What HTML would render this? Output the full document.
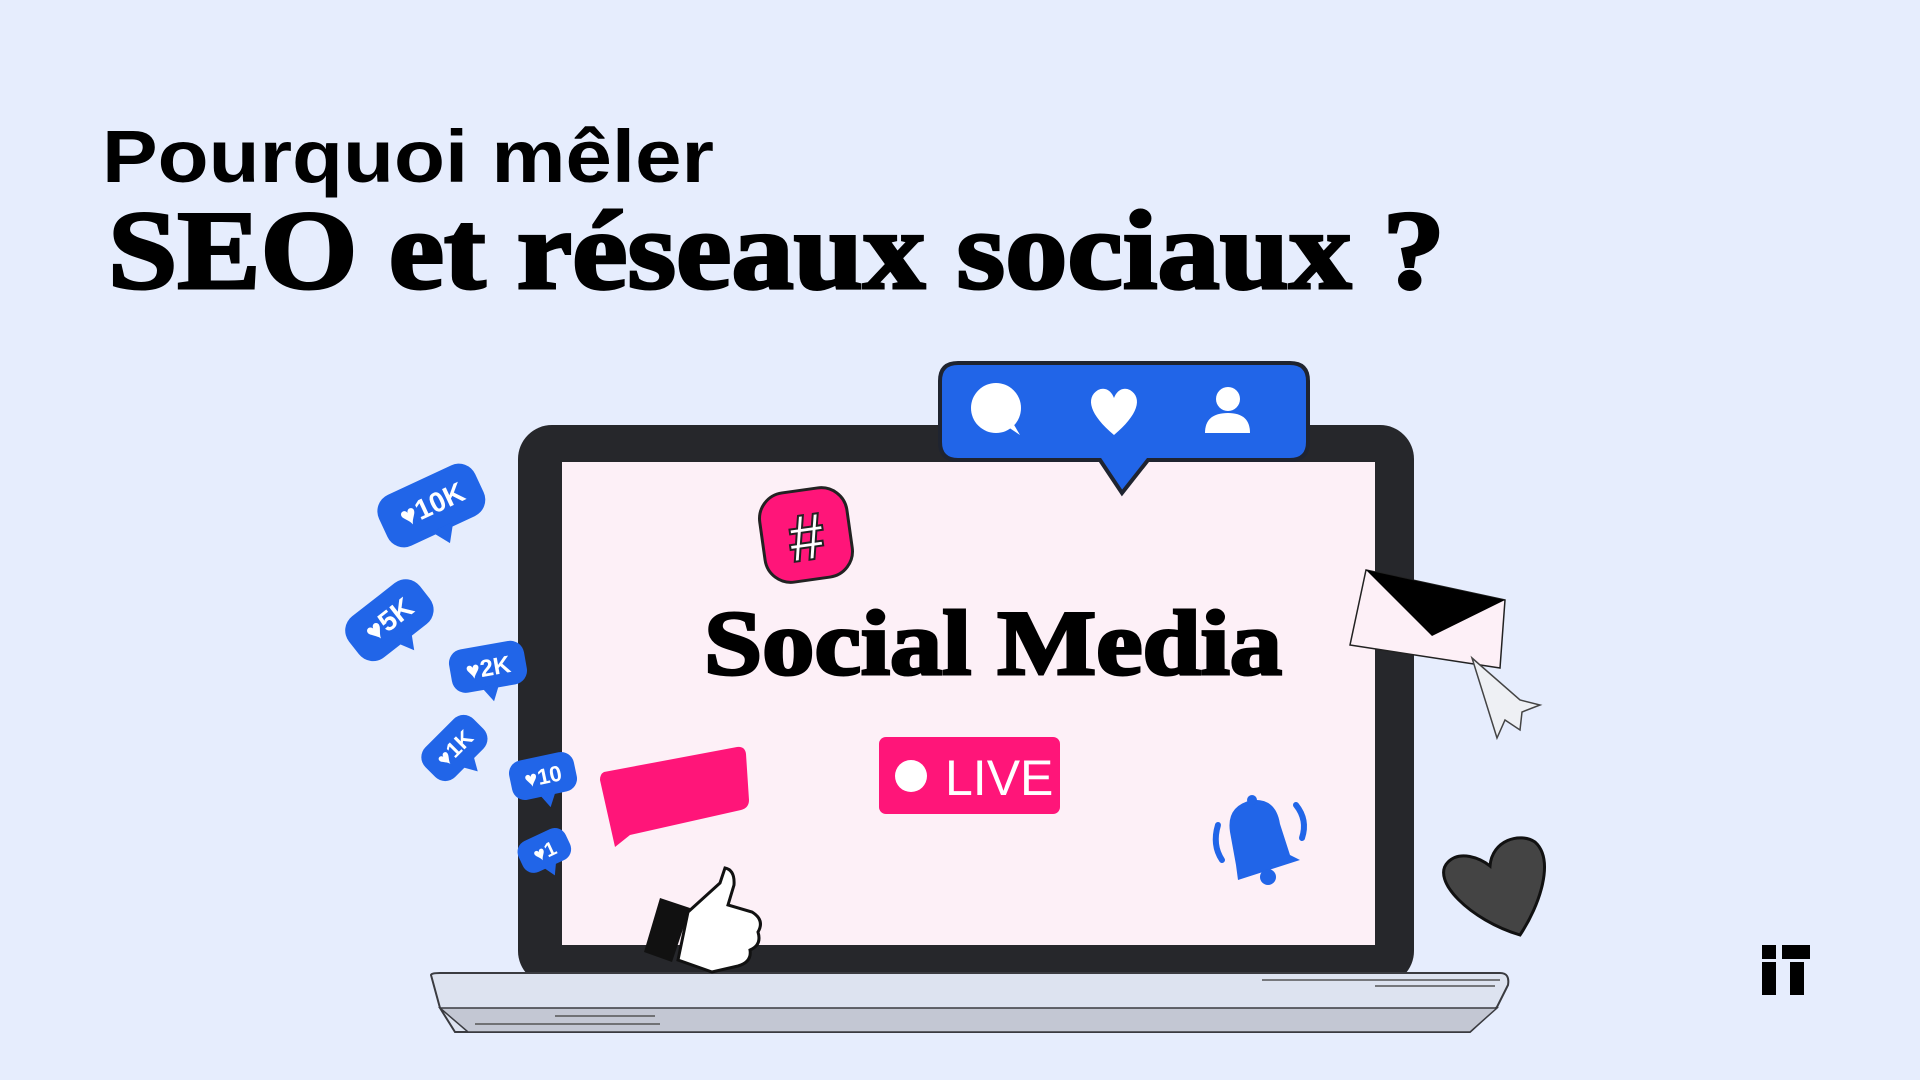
<!DOCTYPE html>
<html><head><meta charset="utf-8"><style>
html,body{margin:0;padding:0;width:1920px;height:1080px;overflow:hidden;background:#e6edfd}
svg{display:block}
</style></head><body>
<svg width="1920" height="1080" viewBox="0 0 1920 1080" xmlns="http://www.w3.org/2000/svg">
<rect width="1920" height="1080" fill="#e6edfd"/>
<text x="102" y="182" font-family="Liberation Sans, sans-serif" font-weight="bold" font-size="74" fill="#000" textLength="612" lengthAdjust="spacingAndGlyphs">Pourquoi mêler</text>
<text x="108" y="288" font-family="Liberation Serif, serif" font-weight="bold" font-size="112" fill="#000" stroke="#000" stroke-width="3" textLength="1337" lengthAdjust="spacingAndGlyphs">SEO et réseaux sociaux ?</text>

<!-- laptop -->
<rect x="518" y="425" width="896" height="560" rx="34" fill="#26272b"/>
<rect x="562" y="462" width="813" height="483" fill="#fdf0f7"/>
<path d="M431 975 Q431 973 440 973 L1500 973 Q1510 973 1508 985 L1497 1007 L1470 1032 L455 1032 L440 1008 Z" fill="#dde3f0" stroke="#3a3b40" stroke-width="2"/>
<path d="M440 1008 L1497 1008 L1470 1032 L468 1032 Z" fill="#c3c7d3" stroke="#3a3b40" stroke-width="1.5"/>
<line x1="1262" y1="980" x2="1500" y2="980" stroke="#555" stroke-width="1.5"/>
<line x1="1375" y1="986" x2="1495" y2="986" stroke="#555" stroke-width="1.5"/>
<line x1="475" y1="1024" x2="660" y2="1024" stroke="#555" stroke-width="1.5"/>
<line x1="555" y1="1016" x2="655" y2="1016" stroke="#555" stroke-width="1.5"/>

<!-- blue bubble -->
<path d="M958 363 L1290 363 Q1308 363 1308 381 L1308 442 Q1308 460 1290 460 L1148 460 L1122 493 L1100 460 L958 460 Q940 460 940 442 L940 381 Q940 363 958 363 Z" fill="#2165e8" stroke="#1f2430" stroke-width="4"/>
<circle cx="996" cy="408" r="25" fill="#fff"/><path d="M1005 425 L1020 435 L1010 418 Z" fill="#fff"/>
<path d="M1114 435 C1090 415 1085 398 1098 390 C1106 386 1112 392 1114 398 C1116 392 1122 386 1130 390 C1143 398 1138 415 1114 435 Z" fill="#fff"/>
<circle cx="1228" cy="399" r="12" fill="#fff"/><path d="M1205 433 Q1205 413 1228 413 Q1250 413 1250 433 Z" fill="#fff"/>

<text x="704" y="674" font-family="Liberation Serif, serif" font-weight="bold" font-size="92" fill="#000" stroke="#000" stroke-width="3" textLength="578" lengthAdjust="spacingAndGlyphs">Social Media</text>

<!-- LIVE -->
<rect x="879" y="737" width="181" height="77" rx="7" fill="#ff1579"/>
<circle cx="911" cy="776" r="16" fill="#fff"/>
<text x="945" y="795" font-family="Liberation Sans, sans-serif" font-size="50" fill="#fff">LIVE</text>

<!-- hashtag -->
<rect x="762" y="490" width="88" height="90" rx="26" fill="#ff1579" stroke="#222" stroke-width="3" transform="rotate(-8 806 535)"/>
<text x="806" y="560" font-family="Liberation Sans, sans-serif" font-weight="bold" font-size="66" fill="#fff" stroke="#222" stroke-width="2" text-anchor="middle" transform="rotate(-8 806 535)">#</text>

<!-- pink chat -->
<path d="M604 772 L737 747 Q745 746 746 754 L749 800 Q749 808 741 810 L630 835 L615 847 L600 780 Q600 774 604 772Z" fill="#ff1579"/>

<!-- bell -->
<path d="M1236 865 L1230 832 Q1226 806 1252 800 Q1276 798 1280 824 L1290 855 L1300 860 L1238 880 Z" fill="#2165e8"/>
<circle cx="1268" cy="877" r="8" fill="#2165e8"/><circle cx="1252" cy="800" r="5" fill="#2165e8"/>
<path d="M1218 825 Q1212 845 1222 860" stroke="#2165e8" stroke-width="6" fill="none" stroke-linecap="round"/>
<path d="M1296 805 Q1308 820 1302 838" stroke="#2165e8" stroke-width="6" fill="none" stroke-linecap="round"/>

<!-- envelope -->
<path d="M1366 570 L1505 600 L1500 668 L1350 645 Z" fill="#fdf0f7" stroke="#222" stroke-width="1.5"/>
<path d="M1366 570 L1505 600 L1432 636 Z" fill="#000"/>
<path d="M1472 658 L1520 700 L1540 705 L1522 712 L1520 730 L1505 720 L1497 738 Z" fill="#eef0f4" stroke="#444" stroke-width="1.5"/>

<!-- dark heart -->
<path d="M1520 935 C1470 920 1430 880 1448 862 C1460 850 1480 858 1490 866 C1492 840 1520 832 1535 842 C1555 860 1540 905 1520 935 Z" fill="#444" stroke="#111" stroke-width="3"/>

<!-- thumbs -->
<path d="M660 898 L690 908 L672 962 L644 952 Z" fill="#111"/>
<path d="M688 912 L720 883 L725 868 Q735 870 734 885 L728 905 L752 912 Q765 920 758 932 Q762 945 750 950 Q752 962 738 966 L712 972 L678 960 Z" fill="#fff" stroke="#111" stroke-width="3"/>

<!-- like bubbles -->
<g fill="#2165e8" font-family="Liberation Sans, sans-serif" font-weight="bold">
<g transform="rotate(-25 430 505)"><rect x="378" y="478" width="106" height="56" rx="18"/><path d="M420 530 L432 548 L444 530Z"/><text x="432" y="515" fill="#fff" font-size="28" text-anchor="middle">♥10K</text></g>
<g transform="rotate(-38 388 620)"><rect x="344" y="595" width="90" height="52" rx="18"/><path d="M380 642 L390 660 L400 642Z"/><text x="389" y="630" fill="#fff" font-size="28" text-anchor="middle">♥5K</text></g>
<g transform="rotate(-10 487 667)"><rect x="450" y="645" width="76" height="44" rx="14"/><path d="M478 686 L488 702 L496 686Z"/><text x="488" y="676" fill="#fff" font-size="24" text-anchor="middle">♥2K</text></g>
<g transform="rotate(-45 453 748)"><rect x="420" y="728" width="68" height="42" rx="14"/><path d="M446 768 L454 782 L462 768Z"/><text x="454" y="757" fill="#fff" font-size="22" text-anchor="middle">♥1K</text></g>
<g transform="rotate(-12 543 776)"><rect x="510" y="756" width="66" height="40" rx="13"/><path d="M536 794 L544 808 L552 794Z"/><text x="543" y="784" fill="#fff" font-size="22" text-anchor="middle">♥10</text></g>
<g transform="rotate(-25 543 850)"><rect x="518" y="834" width="52" height="34" rx="12"/><path d="M536 866 L543 878 L550 866Z"/><text x="544" y="859" fill="#fff" font-size="20" text-anchor="middle">♥1</text></g>
</g>

<!-- logo -->
<rect x="1762" y="945" width="14" height="14" fill="#000"/>
<rect x="1762" y="962" width="14" height="33" fill="#000"/>
<rect x="1782" y="945" width="28" height="14" fill="#000"/>
<rect x="1790" y="962" width="14" height="33" fill="#000"/>
</svg>
</body></html>
